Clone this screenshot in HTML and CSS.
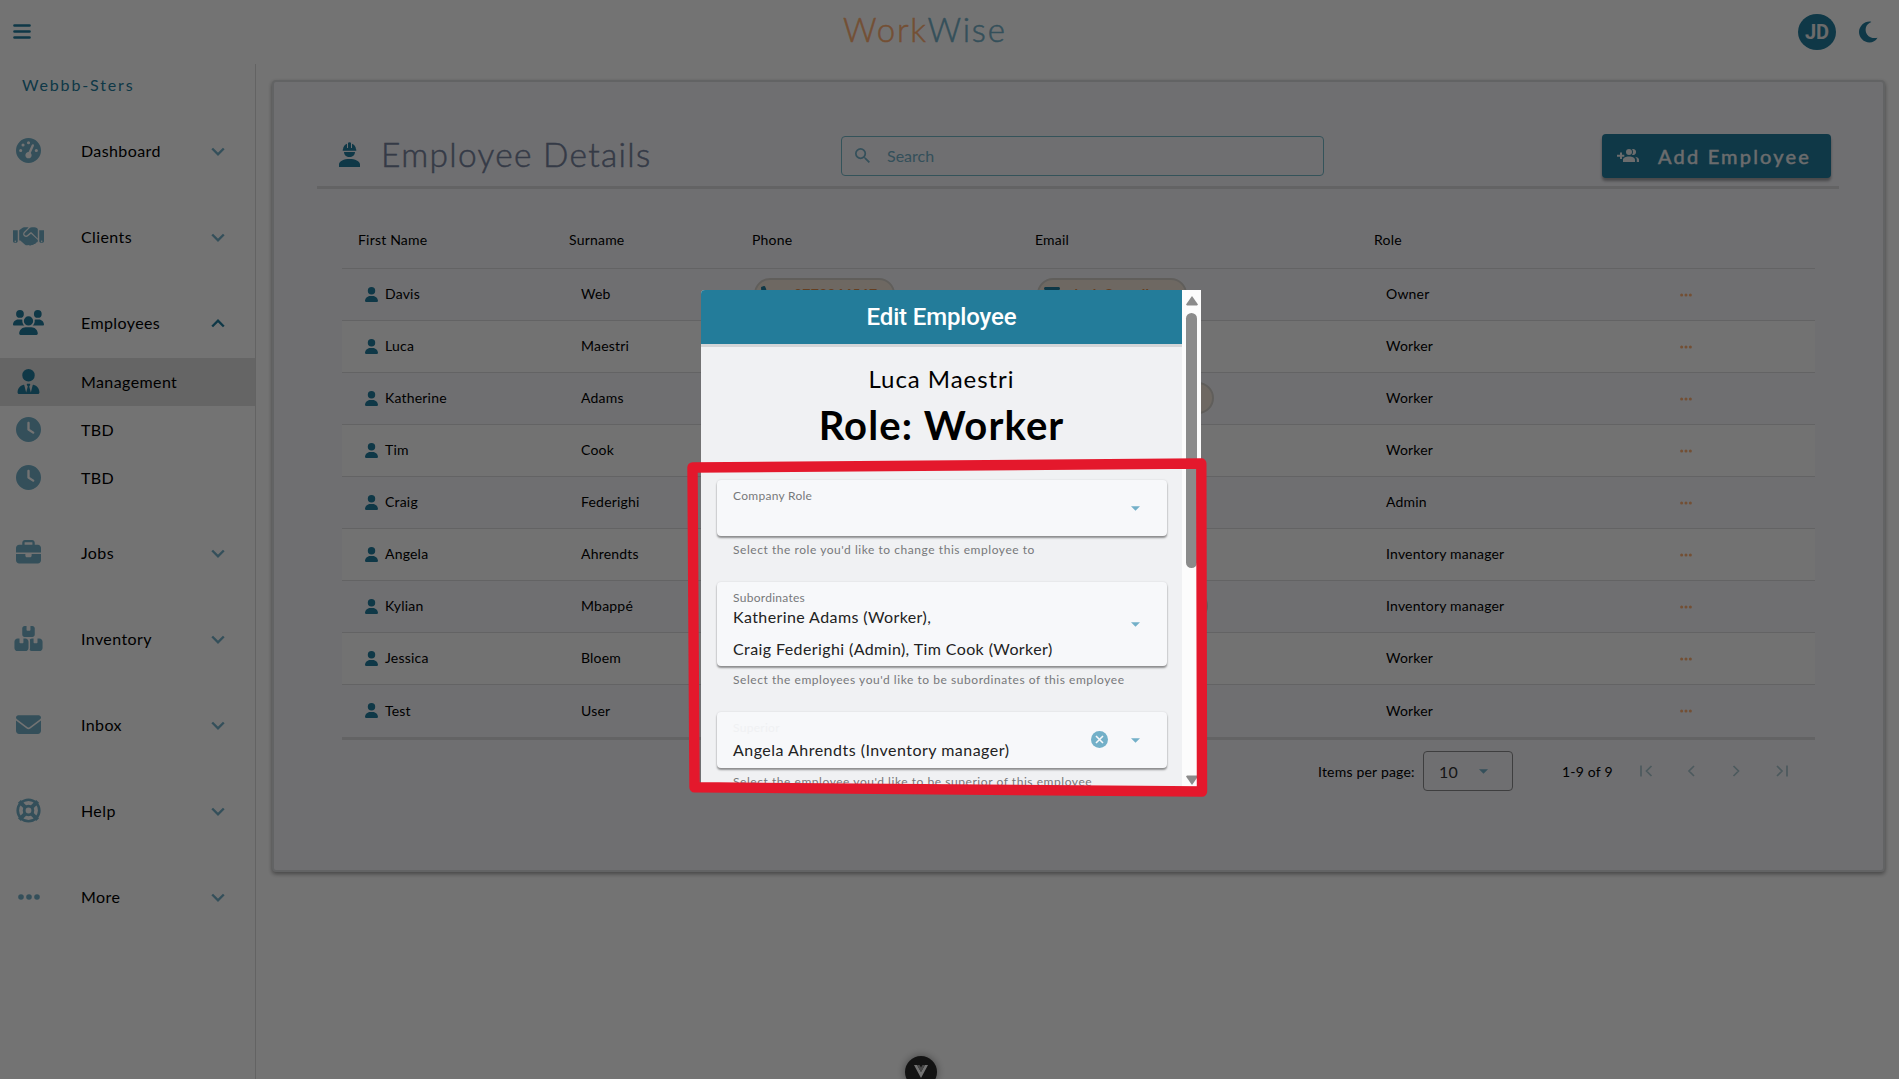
FILE: index.html
```html
<!DOCTYPE html>
<html lang="en">
<head>
<meta charset="utf-8">
<title>WorkWise</title>
<link rel="stylesheet" href="styles.css">
</head>
<body>
<svg class="defs" width="0" height="0">
  <symbol id="user" viewBox="0 0 448 512"><path d="M224 256A128 128 0 1 0 224 0a128 128 0 1 0 0 256zm-45.7 48C79.800 304 0 383.800 0 482.300C0 498.700 13.300 512 29.700 512H418.300c16.400 0 29.700-13.300 29.700-29.700C448 383.800 368.200 304 269.700 304H178.300z"/></symbol>
  <symbol id="down" viewBox="0 0 14 10"><path d="M1.200 1.500 7 7.300l5.800-5.800" fill="none" stroke="currentColor" stroke-width="2.400"/></symbol>
  <symbol id="clock" viewBox="0 0 512 512"><path fill-rule="evenodd" d="M256 0a256 256 0 1 1 0 512A256 256 0 1 1 256 0zM232 120V256c0 8 4 15.500 10.700 20l96 64c11 7.400 25.900 4.400 33.300-6.700s4.400-25.900-6.700-33.300L280 243.200V120c0-13.300-10.700-24-24-24s-24 10.700-24 24z"/></symbol>
  <symbol id="dots" viewBox="0 0 22 6"><circle cx="3" cy="3" r="2.800"/><circle cx="11" cy="3" r="2.800"/><circle cx="19" cy="3" r="2.800"/></symbol>
  <symbol id="caret" viewBox="0 0 10 5"><path d="M0 0h10L5 5z"/></symbol>
  <symbol id="phone" viewBox="0 0 512 512"><path d="M164.900 24.600c-7.700-18.600-28-28.500-47.400-23.200l-88 24C12.100 30.200 0 46 0 64C0 311.400 200.600 512 448 512c18 0 33.800-12.100 38.600-29.500l24-88c5.300-19.400-4.600-39.700-23.200-47.400l-96-40c-16.300-6.800-35.200-2.100-46.300 11.600L304.700 368C234.300 334.700 177.300 277.700 144 207.300L193.300 167c13.700-11.200 18.400-30 11.600-46.300l-40-96z"/></symbol>
  <symbol id="mail" viewBox="0 0 512 384"><path d="M48 0C21.500 0 0 21.500 0 48c0 15.100 7.100 29.300 19.200 38.400L236.800 249.600c11.400 8.500 27 8.500 38.400 0L492.800 86.400c12.100-9.100 19.200-23.300 19.200-38.400c0-26.500-21.500-48-48-48H48zM0 112V320c0 35.300 28.700 64 64 64H448c35.300 0 64-28.700 64-64V112L294.400 275.200c-22.800 17.100-54 17.100-76.800 0L0 112z"/></symbol>
</svg>

<header class="topbar">
  <svg class="burger" viewBox="0 0 18 15"><path d="M1.500 1.500h15M1.500 7.500h15M1.500 13.500h15" stroke="currentColor" stroke-width="2.700" stroke-linecap="round"/></svg>
  <div class="logo"><span class="work">Work</span><span class="wise">Wise</span></div>
  <div class="account">
    <div class="avatar">JD</div>
    <svg class="moon" viewBox="0 0 20 22"><path d="M13 .5C7 2.500 5.500 9 8.500 13.500c2.500 3.500 7 4.500 11 3.500C17.500 20.500 14.500 22 11 22 5 22 0 17 0 11S5.500 0 11 0c.8 0 1.400.1 2 .5z"/></svg>
  </div>
</header>

<div class="shell">
  <nav class="sidebar">
    <div class="brand">Webbb-Sters</div>
    <div class="item"><svg class="ic" viewBox="0 0 512 512"><path d="M0 256a256 256 0 1 1 512 0A256 256 0 1 1 0 256zM288 96a32 32 0 1 0 -64 0 32 32 0 1 0 64 0zM256 416c35.300 0 64-28.700 64-64c0-17.400-6.900-33.100-18.100-44.600L366 161.700c5.300-12.100-.2-26.300-12.300-31.600s-26.300 .2-31.600 12.300L257.900 288c-.6 0-1.300 0-1.900 0c-35.300 0-64 28.700-64 64s28.700 64 64 64zM176 144a32 32 0 1 0 -64 0 32 32 0 1 0 64 0zM96 288a32 32 0 1 0 0-64 32 32 0 1 0 0 64zm352-32a32 32 0 1 0 -64 0 32 32 0 1 0 64 0z"/></svg><span>Dashboard</span><svg class="chev"><use href="#down"/></svg></div>
    <div class="item"><svg class="ic wide" viewBox="0 0 640 384"><path fill-rule="evenodd" d="M0 64h98v224c0 18-14 32-32 32H32c-18 0-32-14-32-32zm48 208a16 16 0 1 0 0 32 16 16 0 0 0 0-32zM542 64h98v224c0 18-14 32-32 32h-34c-18 0-32-14-32-32zm50 208a16 16 0 1 0 0 32 16 16 0 0 0 0-32z"/><path d="M128 64l56-44C198 6 216 0 234 0h42c20 0 34 2 46 8l-92 84c-26 26-28 62-4 88 26 28 64 26 90 2l56-46 132 120c14 14 14 34 2 48-8 8-18 12-28 12-4 20-20 34-42 32-10 18-32 26-52 18-20 18-50 16-70 4-28 8-50 4-70-14l-94-84h-22z"/><path d="M340 24c14-16 30-24 52-24h50c18 0 36 6 50 18l20 20v198L386 108c-6-8-16-8-24-2l-66 56c-16 14-38 14-52 0-14-16-12-36 4-50z"/></svg><span>Clients</span><svg class="chev"><use href="#down"/></svg></div>
    <div class="item active"><svg class="ic wide tall" viewBox="0 0 640 512"><path d="M144 0a80 80 0 1 1 0 160A80 80 0 1 1 144 0zM512 0a80 80 0 1 1 0 160A80 80 0 1 1 512 0zM0 298.700C0 239.800 47.800 192 106.700 192h42.700c15.900 0 31 3.500 44.600 9.700c-1.300 7.200-1.900 14.700-1.900 22.300c0 38.200 16.800 72.500 43.300 96H21.300C9.600 320 0 310.400 0 298.700zM405.300 320c26.600-23.500 43.300-57.800 43.300-96c0-7.600-.7-15-1.900-22.300c13.600-6.300 28.700-9.700 44.600-9.700h42.700C592.200 192 640 239.800 640 298.700c0 11.800-9.600 21.300-21.300 21.300H405.300zM224 224a96 96 0 1 1 192 0 96 96 0 1 1 -192 0zM128 485.300C128 411.700 187.700 352 261.300 352H378.700C452.300 352 512 411.700 512 485.300c0 14.700-11.900 26.700-26.700 26.700H154.700c-14.700 0-26.700-11.900-26.700-26.700z"/></svg><span>Employees</span><svg class="chev up"><use href="#down"/></svg></div>
    <div class="item sub selected active"><svg class="ic" viewBox="0 0 448 512"><path d="M96 128a128 128 0 1 0 256 0A128 128 0 1 0 96 128zm94.500 200.200l18.600 31L175.800 483.100l-36-146.900c-2-8.100-9.800-13.400-17.900-11.300C51.900 342.400 0 405.800 0 481.300c0 17 13.800 30.700 30.700 30.700H162.500 285.500 417.300c17 0 30.700-13.800 30.700-30.700c0-75.500-51.900-138.900-121.900-156.400c-8.100-2-15.900 3.300-17.900 11.300l-36 146.900L238.900 359.200l18.600-31c6.400-10.700-1.300-24.200-13.700-24.200H204.200c-12.400 0-20.100 13.600-13.700 24.200z"/></svg><span>Management</span></div>
    <div class="item sub"><svg class="ic"><use href="#clock"/></svg><span>TBD</span></div>
    <div class="item sub"><svg class="ic"><use href="#clock"/></svg><span>TBD</span></div>
    <div class="item after"><svg class="ic" viewBox="0 0 512 512"><path d="M184 48H328c4.400 0 8 3.600 8 8V96H176V56c0-4.400 3.600-8 8-8zm-56 8V96H64C28.700 96 0 124.700 0 160v96H192 320 512V160c0-35.300-28.700-64-64-64H384V56c0-30.900-25.100-56-56-56H184c-30.900 0-56 25.100-56 56zM512 288H320v32c0 17.700-14.300 32-32 32H224c-17.700 0-32-14.300-32-32V288H0V416c0 35.300 28.700 64 64 64H448c35.300 0 64-28.700 64-64V288z"/></svg><span>Jobs</span><svg class="chev"><use href="#down"/></svg></div>
    <div class="item"><svg class="ic wide tall" viewBox="0 0 576 512"><path d="M248 0H208c-26.500 0-48 21.500-48 48V176c0 26.500 21.500 48 48 48H368c26.500 0 48-21.500 48-48V48c0-26.500-21.500-48-48-48H328V80c0 8.800-7.200 16-16 16H264c-8.800 0-16-7.200-16-16V0zM64 256c-35.300 0-64 28.700-64 64V448c0 35.300 28.700 64 64 64H224c35.300 0 64-28.700 64-64V320c0-35.300-28.700-64-64-64H184v80c0 8.800-7.200 16-16 16H120c-8.800 0-16-7.200-16-16V256H64zM352 512H512c35.300 0 64-28.700 64-64V320c0-35.300-28.700-64-64-64H472v80c0 8.800-7.200 16-16 16H408c-8.800 0-16-7.200-16-16V256H366c-20 0-38 7-51 20 3 10 5 30 5 44V448c0 16-4 30-10 42 12 14 26 22 42 22z"/></svg><span>Inventory</span><svg class="chev"><use href="#down"/></svg></div>
    <div class="item"><svg class="ic"><use href="#mail"/></svg><span>Inbox</span><svg class="chev"><use href="#down"/></svg></div>
    <div class="item"><svg class="ic" viewBox="0 0 26 26"><g fill="none" stroke="currentColor"><circle cx="13" cy="13" r="11.200" stroke-width="2.800"/><circle cx="13" cy="13" r="4.500" stroke-width="3"/><path d="M3.500 3.500l6 6M22.500 3.500l-6 6M3.500 22.500l6-6M22.500 22.500l-6-6" stroke-width="4.200"/></g></svg><span>Help</span><svg class="chev"><use href="#down"/></svg></div>
    <div class="item"><svg class="ic dots"><use href="#dots"/></svg><span>More</span><svg class="chev"><use href="#down"/></svg></div>
  </nav>

  <main class="card">
    <div class="head">
      <div class="title">
        <svg viewBox="0 0 21 25"><path d="M4 7.500C4 4.500 6 2.500 8 1.800V6h1V.8Q10.500-.2 12 .8V6h1V1.800c2 .7 4 2.700 4 5.700h.3v1.300H3.700V7.500zM5 10h11c0 3-2.500 5-5.500 5S5 13 5 10zM10.500 17C16 17 21 19 21 22.500V25H0v-2.500C0 19 5 17 10.500 17z"/></svg>
        <h1>Employee Details</h1>
      </div>
      <div class="search"><svg viewBox="3 3 17.500 17.500"><path d="M15.500 14h-.79l-.28-.27A6.471 6.471 0 0 0 16 9.500 6.500 6.500 0 1 0 9.500 16c1.610 0 3.090-.59 4.230-1.570l.27.28v.79l5 4.990L20.490 19l-4.990-5zm-6 0C7.010 14 5 11.990 5 9.500S7.010 5 9.500 5 14 7.010 14 9.500 11.990 14 9.500 14z"/></svg><span>Search</span></div>
      <div class="add"><svg viewBox="0 0 22 13"><path d="M3 3.500h2v2.200h2.300v2H5V10H3V7.700H0v-2h3zM12 0a3 3 0 1 1 0 6 3 3 0 0 1 0-6zM15 .2a3 3 0 1 1 0 5.600c1.300-1.700 1.300-3.900 0-5.600zM12 7.500c3.500 0 6 1.300 6 3.300V13H6v-2.200c0-2 2.500-3.300 6-3.300zM18 7.800c2.500.4 4 1.500 4 3V13h-2.200v-2.200c0-1.200-.6-2.200-1.800-3z"/></svg><span>Add Employee</span></div>
    </div>

    <div class="table">
      <div class="tr th"><span>First Name</span><span>Surname</span><span>Phone</span><span>Email</span><span>Role</span><span></span></div>
      <div class="tr"><span class="name"><svg><use href="#user"/></svg>Davis</span><span>Web</span><span><b class="pill"><svg><use href="#phone"/></svg><em>0773246567</em></b></span><span><b class="pill mail"><svg><use href="#mail"/></svg><em>davis@gmail.com</em></b></span><span>Owner</span><span><svg class="more"><use href="#dots"/></svg></span></div>
      <div class="tr"><span class="name"><svg><use href="#user"/></svg>Luca</span><span>Maestri</span><span></span><span></span><span>Worker</span><span><svg class="more"><use href="#dots"/></svg></span></div>
      <div class="tr"><span class="name"><svg><use href="#user"/></svg>Katherine</span><span>Adams</span><span></span><span><b class="pill long"></b></span><span>Worker</span><span><svg class="more"><use href="#dots"/></svg></span></div>
      <div class="tr"><span class="name"><svg><use href="#user"/></svg>Tim</span><span>Cook</span><span></span><span></span><span>Worker</span><span><svg class="more"><use href="#dots"/></svg></span></div>
      <div class="tr"><span class="name"><svg><use href="#user"/></svg>Craig</span><span>Federighi</span><span></span><span></span><span>Admin</span><span><svg class="more"><use href="#dots"/></svg></span></div>
      <div class="tr"><span class="name"><svg><use href="#user"/></svg>Angela</span><span>Ahrendts</span><span></span><span></span><span>Inventory manager</span><span><svg class="more"><use href="#dots"/></svg></span></div>
      <div class="tr"><span class="name"><svg><use href="#user"/></svg>Kylian</span><span>Mbappé</span><span></span><span><b class="pill mid"></b></span><span>Inventory manager</span><span><svg class="more"><use href="#dots"/></svg></span></div>
      <div class="tr"><span class="name"><svg><use href="#user"/></svg>Jessica</span><span>Bloem</span><span></span><span></span><span>Worker</span><span><svg class="more"><use href="#dots"/></svg></span></div>
      <div class="tr"><span class="name"><svg><use href="#user"/></svg>Test</span><span>User</span><span></span><span></span><span>Worker</span><span><svg class="more"><use href="#dots"/></svg></span></div>
    </div>

    <div class="pager">
      <span class="per">Items per page:</span>
      <div class="select"><span>10</span><svg class="caret"><use href="#caret"/></svg></div>
      <span class="range">1-9 of 9</span>
      <svg class="nav" viewBox="0 0 160 12"><g fill="none" stroke="currentColor" stroke-width="1.700"><path d="M1 .5v11M11.500 1 6.500 6l5 5M54 1l-5 5 5 5M93.500 1l5 5-5 5M137 1l5 5-5 5M147 .5v11"/></g></svg>
    </div>
  </main>
</div>

<div class="vue"><svg viewBox="0 0 14 13"><path d="M0 0h3l4 7 4-7h3L7 13z" fill="#ffffff"/><path d="M3 0h2.500L7 2.600 8.500 0H11L7 7z" fill="#a0a0a0"/></svg></div>
<div class="scrim"></div>

<section class="modal">
  <div class="content">
    <h2>Edit Employee</h2>
    <div class="who">Luca Maestri</div>
    <div class="role">Role: Worker</div>
    <div class="field"><div class="text"><label>Company Role</label></div><svg class="caret"><use href="#caret"/></svg></div>
    <p class="hint">Select the role you'd like to change this employee to</p>
    <div class="field multi"><div class="text"><label>Subordinates</label><div class="v v1">Katherine Adams (Worker),</div><div class="v v2">Craig Federighi (Admin), Tim Cook (Worker)</div></div><svg class="caret"><use href="#caret"/></svg></div>
    <p class="hint">Select the employees you'd like to be subordinates of this employee</p>
    <div class="field"><div class="text"><label class="faint">Superior</label><div class="v v3">Angela Ahrendts (Inventory manager)</div></div><svg class="clear" viewBox="0 0 17 17"><circle cx="8.500" cy="8.500" r="8.500"/><path d="M5 5l7 7M12 5l-7 7" stroke="#f7f8fa" stroke-width="1.600"/></svg><svg class="caret"><use href="#caret"/></svg></div>
    <p class="hint">Select the employee you'd like to be superior of this employee</p>
  </div>
  <div class="scroll"><svg viewBox="0 0 12 10"><path d="M6 0l6 8.500-1 1H1l-1-1z"/></svg><i></i><svg class="end" viewBox="0 0 12 10"><path d="M6 10l6-8.500-1-1H1l-1 1z"/></svg></div>
</section>

<svg class="frame" viewBox="0 0 1899 1079"><path d="M692.500 467.500 1201.300 463.500 1202 791.500 694.500 787.300z" fill="none" stroke="#e4182c" stroke-width="10.400" stroke-linejoin="round"/></svg>
</body>
</html>
```
FILE: styles.css
```css
* { box-sizing: border-box; }
body { margin: 0; width: 1899px; height: 1079px; overflow: hidden; background: #fff; color: #000; font-family: Lato, "Noto Sans", sans-serif; font-size: 16px; }
svg { display: block; fill: currentColor; flex: none; }
h1, h2, p { margin: 0; font-weight: 400; }
.defs { position: absolute; }

.topbar { height: 64px; display: grid; grid-template-columns: 843px 1fr auto; align-items: start; color: #227c9d; }
.burger { width: 18px; height: 15px; margin: 24px 0 0 13px; }
.logo { font-size: 33px; line-height: 40px; font-weight: 300; margin-top: 9px; letter-spacing: 1.8px; -webkit-text-stroke: .5px currentColor; }
.work { color: #ffb074; }
.wise { color: #73b0c8; }
.account { display: flex; align-items: center; gap: 23px; padding: 14px 21px 0 0; }
.avatar { width: 38px; height: 36px; border-radius: 50%; background: #227c9d; color: #eee; font: 700 20px/37px Roboto, sans-serif; text-align: center; }
.moon { width: 19px; height: 22px; }

.shell { display: flex; height: 1015px; }
.sidebar { width: 256px; border-right: 1px solid #dcdcdc; flex: none; }
.brand { height: 48px; line-height: 41px; margin-bottom: 15px; padding-left: 22px; color: #227c9d; letter-spacing: 1.85px; }
.item { height: 48px; margin: 0 0 38px; display: flex; align-items: center; color: #73b0c8; }
.item span { width: 127px; margin: 0 0 2px 28.5px; color: #000; letter-spacing: 0.4px; }
.item .ic { width: 25px; height: 25px; margin: 0 11.5px 1px 16px; }
.item .wide { width: 31px; margin: 0 8.5px 1px 13px; height: 19px; }
.item .tall { height: 25px; }
.item .dots { height: 6px; width: 22px; margin: 0 13px 0 17.5px; }
.active { color: #227c9d; margin-bottom: 11px; }
.sub { margin: 0; }
.selected { background: #dfdfdf; }
.after { margin-top: 27px; }
.chev { width: 14px; height: 10px; margin: 2px 0 0 3px; }
.up { transform: rotate(180deg); margin-top: 0; }

.card { width: 1613px; height: 792px; margin: 16px 0 0 16px; border: 2px solid #dadbdd; border-radius: 4px; background: #f6f6fb; box-shadow: 0 2px 4px rgba(0,0,0,.4); padding: 0 44px; }
.head { height: 107px; margin-left: -1px; width: 1522px; border-bottom: 3px solid #dcdcde; padding: 52px 8px 0 22px; display: flex; }
.title { display: flex; width: 502px; color: #227c9d; gap: 21px; }
.title svg { width: 21px; height: 25px; margin-top: 8px; }
.title h1 { font-size: 33.5px; font-weight: 300; line-height: 40px; color: #75829c; letter-spacing: 1.3px; white-space: nowrap; -webkit-text-stroke: .5px currentColor; }
.search { width: 483px; height: 40px; margin-top: 2px; border: 1px solid #73b8c8; border-radius: 4px; display: flex; align-items: center; padding-left: 13px; gap: 17px; color: #73b0c8; }
.search span { margin-bottom: 2px; }
.search svg { width: 15px; height: 15px; margin-top: -2px; }
.add { width: 229px; height: 44px; margin-left: auto; border-radius: 4px; background: #227c9d; color: #eef0f2; display: flex; align-items: center; padding-left: 15px; gap: 19px; font-size: 20px; font-weight: 400; letter-spacing: 2.2px; box-shadow: 0 3px 3px rgba(0,0,0,.35); white-space: nowrap; -webkit-text-stroke: .45px currentColor; }
.add svg { width: 22px; height: 13px; margin-bottom: 2px; }

.table { margin: 26px 0 0 24px; width: 1473px; font-size: 14px; letter-spacing: 0.2px; border-bottom: 3px solid #dcdcde; }
.tr { height: 52px; display: grid; grid-template-columns: 211px 183px 283px 339px 322px 1fr; align-items: center; border-top: 1px solid #dcdcde; }
.tr:nth-child(odd) { background: #fcfcfc; }
.tr:last-child { height: 53px; }
.tr > span { padding-left: 28px; white-space: nowrap; margin-bottom: 2px; }
.tr.th { height: 53px; border: 0; background: none; padding-bottom: 2px; }
.th > span { padding-left: 16px; }
.tr .name { display: flex; align-items: center; gap: 7px; padding-left: 23px; }
.name svg { width: 13px; height: 15px; color: #227c9d; margin-top: 1px; }
.tr span:nth-child(3), .tr span:nth-child(4) { padding-left: 18px; }
.th span:nth-child(3), .th span:nth-child(4) { padding-left: 16px; }
.tr span:nth-child(6) { padding-left: 0; margin: 0; }
.tr .more { width: 12px; height: 4px; color: #ffb074; }
.tr .pill { display: flex; align-items: flex-start; width: 141px; height: 32px; border: 2px solid #d5d1cb; border-radius: 16px; background: #f3e7d9; color: #e08a45; padding: 6px 0 0 5px; gap: 20px; font-weight: 700; }
.pill em { font-style: normal; line-height: 16px; }
.pill svg { width: 13px; height: 13px; color: #227c9d; }
.tr .mail { width: 150px; gap: 10px; padding-top: 7px; }
.mail em { margin-top: -1px; }
.mail svg { width: 16px; height: 12px; }
.tr .long { width: 177px; }
.tr .mid { width: 171px; }

.pager { display: flex; align-items: center; height: 40px; margin: 11px 0 0 1000px; font-size: 14px; letter-spacing: .2px; }
.per { width: 105px; white-space: nowrap; }
.select { width: 90px; height: 40px; border: 1px solid #8a8a8c; border-radius: 4px; display: flex; align-items: center; padding-left: 15px; gap: 21px; font-size: 16px; color: #333; }
.caret { width: 9px; height: 5px; color: #73b0c8; }
.range { width: 78px; margin-left: 49px; }
.nav { width: 160px; height: 12px; color: #a9c6ce; }

.vue { position: absolute; left: 905px; top: 1056px; width: 32px; height: 32px; border-radius: 50%; background: #2c2c2c; box-shadow: 0 0 8px rgba(0,0,0,.4); padding: 9px; }
.scrim { position: absolute; inset: 0; background: rgba(0,0,0,.55); z-index: 1; }

.modal { position: absolute; z-index: 3; left: 701px; top: 290px; width: 500px; height: 497px; display: flex; overflow: hidden; border-radius: 4px 0 0 0; background: #f0f1f3; }
.content { width: 481px; }
.modal h2 { height: 57px; background: #237c9a; border-bottom: 3px solid #d4d5d7; color: #fff; font: 500 24px/54px Roboto, sans-serif; text-align: center; letter-spacing: -.15px; }
.who { text-align: center; font-size: 24px; line-height: 32px; margin-top: 16px; letter-spacing: .95px; }
.role { text-align: center; font-size: 40px; font-weight: 700; line-height: 48px; margin-top: 6px; letter-spacing: 1.1px; }
.field { margin: 31px 15px 0 16px; width: 450px; height: 56px; border-radius: 4px; background: #f7f8fa; display: flex; align-items: center; padding: 0 27px 0 16px; box-shadow: 0 2px 2px rgba(0,0,0,.4), 0 0 2px rgba(0,0,0,.12); }
.hint + .field { margin-top: 22px; }
.field .text { flex: 1; align-self: stretch; }
.multi { height: 84px; }
label { display: block; font-size: 12px; line-height: 16px; height: 16px; margin-top: 8px; color: #77787a; letter-spacing: .28px; }
.faint { color: #f0f1f3; }
.v { line-height: 32px; height: 32px; color: #222; margin-top: -5px; letter-spacing: .4px; white-space: nowrap; }
.v2 { margin-top: 0; }
.v3 { margin-top: -2px; letter-spacing: .48px; }
.clear { width: 17px; height: 17px; margin: 0 23px 1px 0; color: #73b0c8; }
.hint { padding-left: 32px; height: 24px; font-size: 12px; line-height: 28px; color: #77787a; letter-spacing: .55px; white-space: nowrap; }
.scroll { width: 19px; background: #fcfcfc; color: #8b8b8b; display: flex; flex-direction: column; align-items: center; padding: 6px 0 2px; }
.scroll svg { width: 12px; height: 10px; }
.scroll i { width: 11px; height: 255px; margin-top: 7px; border-radius: 6px; background: #8b8b8b; }
.scroll .end { margin-top: auto; }
.frame { position: absolute; left: 0; top: 0; width: 1899px; height: 1079px; z-index: 4; }
```
